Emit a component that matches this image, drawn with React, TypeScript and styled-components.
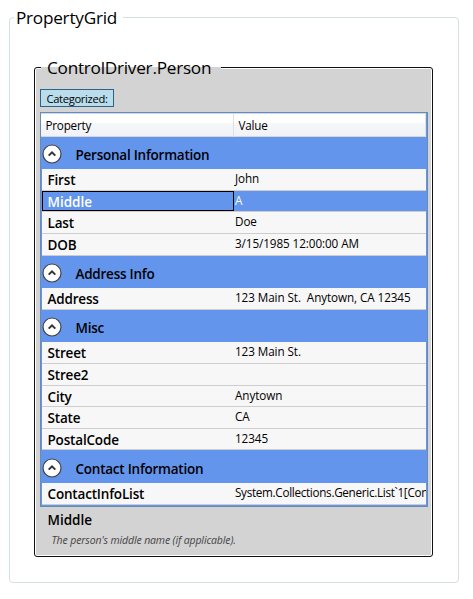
import React from 'react';
import styled, { createGlobalStyle } from 'styled-components';

const GlobalStyle = createGlobalStyle`
  * { box-sizing: border-box; }
  body {
    margin: 0;
    background: #fff;
    color: #000;
    font-family: "Open Sans", "Noto Sans", sans-serif;
    overflow: hidden;
  }
`;

const Page = styled.main`
  width: 473px;
  height: 599px;
  padding: 17px 14px 16px 9px;
`;

const OuterGroup = styled.section`
  width: 450px;
  height: 566px;
  border: 1px solid #d5dfe5;
  border-radius: 4px;
  padding-left: 4px;
`;

const Caption = styled.h1`
  width: 109px;
  height: 24px;
  margin: -12px 0 0;
  padding-left: 2px;
  background: #fff;
  font-size: 17.2px;
  font-weight: 400;
  line-height: 23px;
  letter-spacing: -0.25px;
  white-space: nowrap;
`;

const InnerGroup = styled.section`
  width: 399px;
  height: 490px;
  margin: 37px 0 0 20px;
  border: 1px solid #111;
  border-radius: 3px;
  box-shadow: inset 0 0 0 1px #fff;
  background: #d3d3d3;
  padding: 0 4px 0 5px;
`;

const GroupTitle = styled.h2`
  width: 180px;
  height: 24px;
  margin: -12px 0 0 1px;
  padding-left: 6px;
  background: linear-gradient(#fff 11px, #d3d3d3 11px);
  font-size: 17.2px;
  font-weight: 400;
  line-height: 23px;
  letter-spacing: -0.25px;
  white-space: nowrap;
`;

const ModeButton = styled.button`
  display: block;
  width: 74px;
  height: 18px;
  margin: 9px 0 0;
  padding: 0 0 0 5.5px;
  border: 1px solid #2c628b;
  background: #b9ddeb;
  color: #000;
  font: 11.2px/18px "Open Sans", sans-serif;
  letter-spacing: -0.33px;
  text-align: left;
`;

const Grid = styled.div`
  width: 388px;
  height: 395px;
  margin-top: 5px;
  border: 1px solid #688caf;
  background: #6495ed;
  overflow: hidden;
`;

const HeaderRow = styled.div`
  display: grid;
  grid-template-columns: 193px 192px;
  height: 24px;
  margin: 0 1px 0 0;
  border-top: 1px solid #c9d9f6;
  border-bottom: 1px solid #d5d5d5;
  background: linear-gradient(#fff 9px, #f6f7f9 9px, #f1f2f5);
`;

const HeaderCell = styled.div`
  padding-left: 4.5px;
  border-right: 1px solid #dfe1e4;
  font-size: 11.7px;
  line-height: 23px;
  letter-spacing: -0.23px;
`;

const CategoryRow = styled.div<{ $height: number }>`
  display: flex;
  height: ${(p) => p.$height}px;
  padding: ${(p) => p.$height - 32}px 0 0 1px;
`;

const CategoryName = styled.span`
  margin-left: 13.5px;
  font-size: 13.5px;
  font-weight: 600;
  line-height: 36px;
  letter-spacing: -0.24px;
`;

const Toggle = styled.svg`
  width: 20px;
  height: 20px;
  margin-top: 7px;
  flex: none;
`;

const Row = styled.div<{ $height: number; $selected: boolean }>`
  display: grid;
  grid-template-columns: 192px 1fr;
  height: ${(p) => p.$height}px;
  margin: 0 1px;
  border-bottom: 1px solid #cdcdcd;
  background: ${(p) => (p.$selected ? '#6495ed' : '#f7f7f7')};
  color: ${(p) => (p.$selected ? '#fff' : '#000')};
`;

const NameCell = styled.div<{ $selected: boolean }>`
  height: ${(p) => (p.$selected ? '20px' : 'auto')};
  padding-left: 5.5px;
  outline: ${(p) => (p.$selected ? '1px solid #000' : 'none')};
  outline-offset: -1px;
  font-size: 13.5px;
  font-weight: 600;
  line-height: 22px;
  letter-spacing: ${(p) => (p.$selected ? '-0.02px' : '-0.18px')};
`;

const ValueCell = styled.div<{ $tight: boolean }>`
  min-width: 0;
  padding-left: 1px;
  overflow: hidden;
  font-size: 11.7px;
  line-height: 19px;
  letter-spacing: ${(p) => (p.$tight ? '-0.3px' : '-0.08px')};
  white-space: pre;
`;

const Description = styled.footer`
  padding-left: 7.5px;
`;

const DescriptionName = styled.div`
  height: 24px;
  font-size: 13.5px;
  font-weight: 600;
  line-height: 26px;
  letter-spacing: -0.02px;
`;

const DescriptionText = styled.p`
  margin: 0 0 0 4px;
  color: #444;
  font-size: 10.5px;
  font-style: italic;
  line-height: 18px;
  letter-spacing: -0.13px;
`;

type Property = { name: string; value: string; height: number; selected?: boolean };
type Category = { name: string; height: number; items: Property[] };

const categories: Category[] = [
  {
    name: 'Personal Information',
    height: 32,
    items: [
      { name: 'First', value: 'John', height: 22 },
      { name: 'Middle', value: 'A', height: 21, selected: true },
      { name: 'Last', value: 'Doe', height: 22 },
      { name: 'DOB', value: '3/15/1985 12:00:00 AM', height: 22 },
    ],
  },
  {
    name: 'Address Info',
    height: 32,
    items: [{ name: 'Address', value: '123 Main St.  Anytown, CA 12345', height: 22 }],
  },
  {
    name: 'Misc',
    height: 32,
    items: [
      { name: 'Street', value: '123 Main St.', height: 22 },
      { name: 'Stree2', value: '', height: 22 },
      { name: 'City', value: 'Anytown', height: 21 },
      { name: 'State', value: 'CA', height: 22 },
      { name: 'PostalCode', value: '12345', height: 21 },
    ],
  },
  {
    name: 'Contact Information',
    height: 33,
    items: [
      { name: 'ContactInfoList', value: 'System.Collections.Generic.List`1[Con', height: 22 },
    ],
  },
];

function Chevron() {
  return (
    <Toggle viewBox="0 0 20 20" aria-hidden="true">
      <circle cx="10" cy="10" r="9" fill="#fff" stroke="#444" strokeWidth="1.2" />
      <path d="M6.7 11.6 10 8.3 13.3 11.6" fill="none" stroke="#333" strokeWidth="2" />
    </Toggle>
  );
}

export default function App() {
  return (
    <>
      <GlobalStyle />
      <Page>
        <OuterGroup>
          <Caption>PropertyGrid</Caption>
          <InnerGroup>
            <GroupTitle>ControlDriver.Person</GroupTitle>
            <ModeButton>Categorized:</ModeButton>
            <Grid>
              <HeaderRow>
                <HeaderCell>Property</HeaderCell>
                <HeaderCell>Value</HeaderCell>
              </HeaderRow>
              {categories.map((category) => (
                <React.Fragment key={category.name}>
                  <CategoryRow $height={category.height}>
                    <Chevron />
                    <CategoryName>{category.name}</CategoryName>
                  </CategoryRow>
                  {category.items.map((item) => (
                    <Row key={item.name} $height={item.height} $selected={!!item.selected}>
                      <NameCell $selected={!!item.selected}>{item.name}</NameCell>
                      <ValueCell $tight={item.value.length > 32}>{item.value}</ValueCell>
                    </Row>
                  ))}
                </React.Fragment>
              ))}
            </Grid>
            <Description>
              <DescriptionName>Middle</DescriptionName>
              <DescriptionText>The person's middle name (if applicable).</DescriptionText>
            </Description>
          </InnerGroup>
        </OuterGroup>
      </Page>
    </>
  );
}
